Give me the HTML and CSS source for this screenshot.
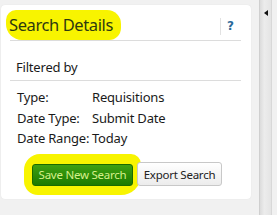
FILE: index.html
```html
<!DOCTYPE html>
<html>
<head>
<meta charset="utf-8">
<link rel="stylesheet" href="styles.css">
</head>
<body>
<div class="page">
  <div class="card">
    <div class="header">
      <span class="mark title-mark"><span class="title">Search Details</span></span>
      <span class="spacer"></span>
      <span class="help">?</span>
    </div>
    <div class="filtered">Filtered by</div>
    <div class="rows">
      <div class="row"><span class="label">Type:</span><span class="value">Requisitions</span></div>
      <div class="row"><span class="label">Date Type:</span><span class="value">Submit Date</span></div>
      <div class="row"><span class="label">Date Range:</span><span class="value">Today</span></div>
    </div>
    <div class="actions">
      <span class="mark btn-mark"><button class="btn btn-green">Save New Search</button></span>
      <button class="btn btn-gray">Export Search</button>
    </div>
  </div>
  <div class="strip">
    <span class="arrow"></span>
  </div>
</div>
</body>
</html>
```
FILE: styles.css
```css
html, body {
  margin: 0;
  padding: 0;
  background: #f1f1f1;
  font-family: "Noto Sans", "Open Sans", sans-serif;
  color: #1a1a1a;
}
.page {
  width: 277px;
  height: 215px;
  display: flex;
  align-items: flex-start;
  overflow: hidden;
}
.card {
  margin: 5px 0 0 1px;
  width: 231px;
  height: 194px;
  padding: 0 10px 0 9px;
  background: #fff;
  border-radius: 4px;
  box-shadow: 0 0 1px #d8d8d8;
  display: flex;
  flex-direction: column;
}
.header {
  display: flex;
  align-items: center;
  height: 34px;
  border-bottom: 1px solid #dcdcdc;
  padding-top: 1px;
}
.mark {
  background: #f8f400;
  border-radius: 10px 14px 12px 16px;
}
.title-mark {
  margin-left: -4px;
  padding: 3px 8px 4px 3px;
  margin-top: 4px;
}
.title {
  font-size: 16.5px;
  color: #2d3a10;
  letter-spacing: -0.4px;
}
.spacer { flex: 1; }
.help {
  border-left: 1px solid #e2e2e2;
  height: 17px;
  line-height: 17px;
  margin-right: 6px;
  padding-left: 6px;
  width: 8px;
  font-weight: bold;
  font-size: 12px;
  color: #2b6a9a;
  font-family: "DejaVu Sans", sans-serif;
  margin-top: 6px;
}
.filtered {
  font-size: 13px;
  padding: 17px 0 3px 6px;
  line-height: 19px;
  border-bottom: 1px solid #dcdcdc;
  letter-spacing: -0.2px;
}
.rows {
  padding: 6px 0 0 7px;
  font-size: 13px;
  letter-spacing: -0.2px;
}
.row {
  display: flex;
  height: 20.5px;
  line-height: 20.5px;
}
.label { width: 75px; }
.actions {
  display: flex;
  align-items: center;
  margin-top: 5px;
  padding-left: 14px;
}
.btn-mark {
  display: flex;
  padding: 10px 8px 9px 8px;
  border-radius: 16px 10px 20px 14px;
}
.btn {
  font-family: "Noto Sans", "Open Sans", sans-serif;
  font-size: 11.5px;
  white-space: nowrap;
  border-radius: 3px;
  padding: 0;
  letter-spacing: -0.25px;
  cursor: pointer;
}
.btn-green {
  background: linear-gradient(#3ea012, #1c7a00);
  border: 1px solid #1a6a00;
  color: #d6f08a;
  width: 101px;
  height: 22px;
}
.btn-gray {
  margin-left: -4px;
  background: linear-gradient(#ffffff, #ececec);
  border: 1px solid #c8c8c8;
  color: #222;
  width: 85px;
  height: 24px;
}
.strip {
  margin-left: 8px;
  width: 11px;
  height: 215px;
  background: linear-gradient(90deg, #dcdcdc, #ececec 40%, #e4e4e4);
  border-left: 1px solid #cfcfcf;
  border-right: 1px solid #d8d8d8;
  position: relative;
}
.arrow {
  position: absolute;
  left: 4px;
  top: 10px;
  width: 0;
  height: 0;
  border-top: 3px solid transparent;
  border-bottom: 3px solid transparent;
  border-right: 4px solid #111;
}
```
